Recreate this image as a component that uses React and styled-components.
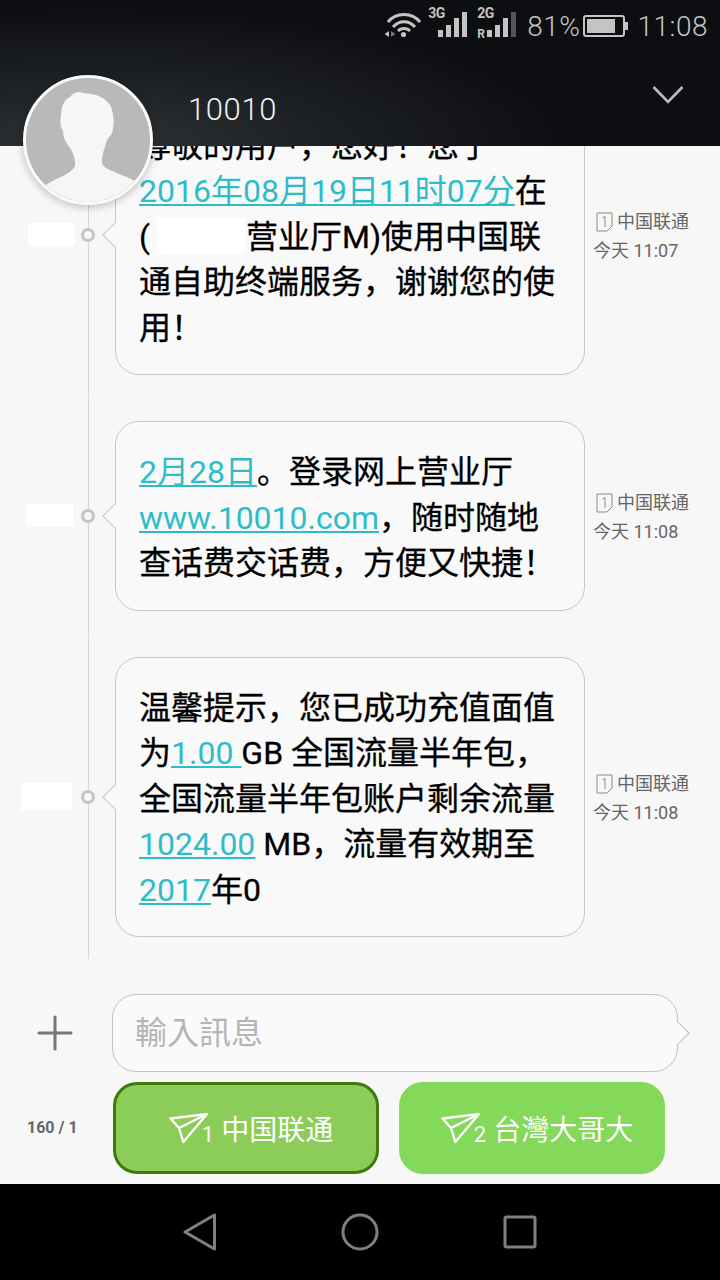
import React from 'react';
import styled, { createGlobalStyle } from 'styled-components';

const GlobalStyle = createGlobalStyle`
  html, body {
    margin: 0;
    padding: 0;
    background: #f7f7f7;
  }
  body {
    font-family: Roboto, "Noto Sans CJK SC", sans-serif;
  }
`;

const Screen = styled.div`
  width: 720px;
  height: 1280px;
  display: flex;
  flex-direction: column;
  overflow: hidden;
  background: #f7f7f7;
`;

const Header = styled.header`
  position: relative;
  z-index: 2;
  height: 146px;
  flex: none;
  padding: 0 12px;
  box-sizing: border-box;
  background:
    radial-gradient(ellipse 480px 140px at 90px 146px, #2e3335 0%, rgba(46, 51, 53, 0) 100%),
    #0d0e11;
`;

const StatusBar = styled.div`
  height: 52px;
  display: flex;
  align-items: center;
  justify-content: flex-end;
`;

const WifiIcon = styled.svg`
  margin: -3px 6px 0 0;
`;

const StatusText = styled.span`
  margin-right: ${(p) => p.$mr || 0}px;
  font-size: 28px;
  font-weight: 300;
  color: #c4c4c4;
  letter-spacing: 0.5px;
`;

const SignalWrap = styled.div`
  position: relative;
  width: 39px;
  height: 29px;
  margin: 0 ${(p) => p.$mr}px 7px 0;
`;

const SignalLabel = styled.span`
  position: absolute;
  left: 0;
  top: 0;
  font-size: 14px;
  line-height: 11px;
  font-weight: 700;
  letter-spacing: -0.4px;
  color: #c4c4c4;
`;

const RoamingMark = styled.span`
  position: absolute;
  left: 0;
  bottom: -2px;
  font-size: 12px;
  line-height: 10px;
  font-weight: 700;
  color: #c4c4c4;
`;

const Bars = styled.div`
  position: absolute;
  right: 0;
  bottom: 0;
  display: flex;
  align-items: flex-end;
  gap: 3px;
`;

const Bar = styled.i`
  width: 5px;
  height: ${(p) => p.$h}px;
  background: ${(p) => (p.$on ? '#c4c4c4' : '#555')};
`;

const Battery = styled.div`
  position: relative;
  width: 42px;
  height: 22px;
  padding: 2px;
  margin-right: 12px;
  box-sizing: border-box;
  border: 2px solid #c4c4c4;
  border-radius: 3px;
  &::after {
    content: '';
    position: absolute;
    right: -5px;
    top: 5px;
    width: 3px;
    height: 8px;
    background: #c4c4c4;
  }
`;

const BatteryFill = styled.div`
  width: 81%;
  height: 100%;
  background: #c4c4c4;
`;

const TitleRow = styled.div`
  height: 94px;
  padding: 0 24px 0 176px;
  display: flex;
  align-items: flex-start;
  justify-content: space-between;
  svg {
    margin-top: 33px;
  }
`;

const Title = styled.h1`
  margin: 40px 0 0;
  font-size: 31px;
  font-weight: 300;
  line-height: 36px;
  letter-spacing: 0.6px;
  color: #f0f0f0;
`;

const Avatar = styled.div`
  position: absolute;
  left: 23px;
  top: 75px;
  width: 124px;
  height: 124px;
  border: 3px solid #fafafa;
  border-radius: 50%;
  overflow: hidden;
  background: #b9b9b9;
  box-shadow: 0 2px 8px rgba(0, 0, 0, 0.25);
`;

const Thread = styled.main`
  flex: 1;
  min-height: 0;
  display: flex;
  flex-direction: column;
  justify-content: flex-end;
  overflow: hidden;
`;

const Row = styled.section`
  flex: none;
  display: flex;
  align-items: center;
  padding: 23px 0;
`;

const Gutter = styled.div`
  position: relative;
  flex: none;
  align-self: stretch;
  margin: -23px 0;
  width: 115px;
  display: flex;
  align-items: center;
  justify-content: flex-end;
  padding-right: 20px;
  box-sizing: border-box;
  &::before {
    content: '';
    position: absolute;
    left: 88px;
    top: 0;
    bottom: 1px;
    width: 1px;
    background: #d6d6d6;
  }
`;

const DateMask = styled.div`
  width: ${(p) => p.$w}px;
  height: ${(p) => p.$h}px;
  margin-right: ${(p) => p.$gap}px;
  background: #fff;
`;

const Dot = styled.span`
  position: relative;
  width: 14px;
  height: 14px;
  box-sizing: border-box;
  border: 3px solid #c4c4c4;
  border-radius: 50%;
  background: #f7f7f7;
`;

const Bubble = styled.div`
  position: relative;
  flex: none;
  width: 470px;
  box-sizing: border-box;
  padding: 28px 23px 23px;
  font-size: 32px;
  line-height: 45.5px;
  white-space: nowrap;
  color: #000;
  -webkit-text-stroke: 0.3px #000;
  background: #f9f9f9;
  border: 1px solid #c6c6c6;
  border-radius: 24px;
  &::before {
    content: '';
    position: absolute;
    left: -10px;
    top: 50%;
    width: 18px;
    height: 18px;
    margin-top: -9px;
    box-sizing: border-box;
    background: #f9f9f9;
    border-left: 1px solid #c6c6c6;
    border-bottom: 1px solid #c6c6c6;
    transform: rotate(45deg);
  }
`;

const Link = styled.span`
  color: #2fbcc9;
  -webkit-text-stroke: 0;
  text-decoration: underline;
  text-decoration-thickness: 2px;
  text-underline-offset: 2px;
`;

const Redacted = styled.span`
  display: inline-block;
  width: 88px;
  height: 36px;
  margin: 0 1px 0 7px;
  vertical-align: -6px;
  background: #fff;
`;

const Meta = styled.div`
  flex: none;
  margin: 4px 0 0 8px;
  display: flex;
  flex-direction: column;
  gap: 3px;
  font-size: 18px;
  line-height: 26px;
  color: #666;
`;

const Sim = styled.span`
  display: flex;
  align-items: center;
  gap: 4px;
  padding-left: 3px;
`;

const Composer = styled.footer`
  flex: none;
  height: 224px;
  box-sizing: border-box;
  padding-top: 34px;
  background: #f7f7f7;
`;

const InputRow = styled.div`
  display: flex;
  align-items: center;
`;

const PlusButton = styled.div`
  width: 112px;
  padding-left: 37px;
  box-sizing: border-box;
  display: flex;
`;

const InputBox = styled.div`
  position: relative;
  width: 566px;
  height: 78px;
  box-sizing: border-box;
  padding: 0 22px;
  font-family: Roboto, "Noto Sans CJK TC", sans-serif;
  font-size: 32px;
  line-height: 76px;
  color: #b4b4b4;
  background: #fafafa;
  border: 1px solid #c2c2c2;
  border-radius: 24px;
  &::after {
    content: '';
    position: absolute;
    right: -9px;
    top: 50%;
    width: 18px;
    height: 18px;
    margin-top: -9px;
    box-sizing: border-box;
    background: #fafafa;
    border-top: 1px solid #c2c2c2;
    border-right: 1px solid #c2c2c2;
    transform: rotate(45deg);
  }
`;

const SendRow = styled.div`
  margin-top: 10px;
  display: flex;
  align-items: center;
  gap: 20px;
`;

const Counter = styled.span`
  width: 113px;
  margin: -2px -20px 0 0;
  padding-left: 27px;
  box-sizing: border-box;
  font-size: 16px;
  font-weight: 700;
  color: #666;
  white-space: nowrap;
`;

const SendButton = styled.div`
  width: 266px;
  height: 92px;
  box-sizing: border-box;
  display: flex;
  align-items: center;
  justify-content: center;
  padding-left: 10px;
  font-size: 28px;
  white-space: nowrap;
  color: #fff;
  border-radius: 24px;
  background: ${(p) => (p.$selected ? '#8ccc58' : '#84d85a')};
  border: ${(p) => (p.$selected ? '3px solid #3d7a0c' : 'none')};
`;

const SimNo = styled.span`
  font-size: 22px;
  line-height: 22px;
  align-self: flex-end;
  margin: 0 7px ${(p) => (p.$selected ? 25 : 28)}px -6px;
`;

const NavBar = styled.nav`
  flex: none;
  height: 96px;
  padding: 0 183px;
  display: flex;
  align-items: center;
  justify-content: space-between;
  background: #000;
`;

const messages = [
  {
    id: 1,
    time: '今天 11:07',
    mask: { w: 47, h: 23, gap: 6 },
    lines: (
      <>
        尊敬的用户，您好！您于<br />
        <Link>2016年08月19日11时07分</Link>在<br />
        (<Redacted />营业厅M)使用中国联<br />
        通自助终端服务，谢谢您的使<br />
        用！
      </>
    ),
  },
  {
    id: 2,
    time: '今天 11:08',
    mask: { w: 47, h: 23, gap: 8 },
    lines: (
      <>
        <Link>2月28日</Link>。登录网上营业厅<br />
        <Link>www.10010.com</Link>，随时随地<br />
        查话费交话费，方便又快捷！
      </>
    ),
  },
  {
    id: 3,
    time: '今天 11:08',
    mask: { w: 51, h: 27, gap: 9 },
    lines: (
      <>
        温馨提示，您已成功充值面值<br />
        为<Link>1.00 </Link>GB 全国流量半年包，<br />
        全国流量半年包账户剩余流量<br />
        <Link>1024.00</Link> MB，流量有效期至<br />
        <Link>2017</Link>年0
      </>
    ),
  },
];

const PlaneIcon = () => (
  <svg width="39" height="31" viewBox="0 0 39 31" fill="none" stroke="#fff" strokeWidth="2.4" strokeLinejoin="round">
    <path d="M1.5 5.5 L38 1 L14.3 29 L10 15 Z" />
    <path d="M10 15 L38 1" />
  </svg>
);

const SimIcon = () => (
  <svg width="17" height="20" viewBox="0 0 17 20" fill="none" stroke="#8a8a8a" strokeWidth="1">
    <path d="M1 1 H16 V14 L11 19 H1 Z" />
    <path d="M6.5 6 L9 4.5 V15" />
  </svg>
);

const Signal = ({ label, heights, dim, roaming, mr }) => (
  <SignalWrap $mr={mr}>
    <SignalLabel>{label}</SignalLabel>
    {roaming && <RoamingMark>R</RoamingMark>}
    <Bars>
      {heights.map((h, i) => (
        <Bar key={i} $h={h} $on={i !== dim} />
      ))}
    </Bars>
  </SignalWrap>
);

const App = () => {
  return (
    <Screen>
      <GlobalStyle />
      <Header>
        <StatusBar>
          <WifiIcon width="38" height="26" viewBox="0 0 38 26" fill="none" stroke="#c4c4c4" strokeWidth="3">
            <path d="M4 10 C12 0 28 0 36 10" />
            <path d="M9 15 C15 8 25 8 31 15" />
            <path d="M14 19 C17 15.5 23 15.5 26 19" />
            <circle cx="19.5" cy="22.5" r="2.6" fill="#c4c4c4" stroke="none" />
            <path d="M0.5 22 L5 19 V25 Z" fill="#c4c4c4" stroke="none" />
            <path d="M7 19 L11.5 22 L7 25 Z" fill="#777" stroke="none" />
          </WifiIcon>
          <Signal label="3G" heights={[7, 12, 19, 25]} mr={10} />
          <Signal label="2G" heights={[7, 12, 19, 25]} dim={3} roaming mr={11} />
          <StatusText $mr={3}>81%</StatusText>
          <Battery><BatteryFill /></Battery>
          <StatusText>11:08</StatusText>
        </StatusBar>
        <TitleRow>
          <Title>10010</Title>
          <svg width="32" height="20" viewBox="0 0 32 20" fill="none" stroke="#bdbdbd" strokeWidth="2.6">
            <path d="M1.5 2 L16 17 L30.5 2" />
          </svg>
        </TitleRow>
        <Avatar>
          <svg width="124" height="124" viewBox="0 0 124 124">
            <path
              fill="#f6f6f6"
              d="M20 107 C30 100 46 96 49 88 C50 82 47 76 45 71 C40 65 37 60 37 53 C34 48 34 44 35 38 C35 28 38 22 44 19 C47 15 51 14 54 14 C58 16 64 15 70 17 C79 20 85 26 86 32 C88 40 88 45 87 50 C87 56 83 59 81 62 C79 70 76 76 76 82 C75 88 80 90 84 92 C92 96 102 99 109 103 L100 124 L20 124 Z"
            />
          </svg>
        </Avatar>
      </Header>

      <Thread>
        {messages.map((m) => (
          <Row key={m.id}>
            <Gutter>
              <DateMask $w={m.mask.w} $h={m.mask.h} $gap={m.mask.gap} />
              <Dot />
            </Gutter>
            <Bubble>{m.lines}</Bubble>
            <Meta>
              <Sim><SimIcon />中国联通</Sim>
              <span>{m.time}</span>
            </Meta>
          </Row>
        ))}
      </Thread>

      <Composer>
        <InputRow>
          <PlusButton>
            <svg width="36" height="36" viewBox="0 0 36 36" stroke="#777" strokeWidth="3" strokeLinecap="round">
              <path d="M18 2 V34 M2 18 H34" />
            </svg>
          </PlusButton>
          <InputBox>輸入訊息</InputBox>
        </InputRow>
        <SendRow>
          <Counter>160 / 1</Counter>
          <SendButton $selected>
            <PlaneIcon /><SimNo $selected>1</SimNo>中国联通
          </SendButton>
          <SendButton>
            <PlaneIcon /><SimNo>2</SimNo>台灣大哥大
          </SendButton>
        </SendRow>
      </Composer>

      <NavBar>
        <svg width="34" height="38" viewBox="0 0 34 38" fill="none" stroke="#808080" strokeWidth="3" strokeLinejoin="round">
          <path d="M31.5 2 V36 L2 19 Z" />
        </svg>
        <svg width="38" height="38" viewBox="0 0 38 38" fill="none" stroke="#808080" strokeWidth="3">
          <circle cx="19" cy="19" r="17" />
        </svg>
        <svg width="34" height="34" viewBox="0 0 34 34" fill="none" stroke="#808080" strokeWidth="3" strokeLinejoin="round">
          <rect x="2" y="2" width="30" height="30" rx="1.5" />
        </svg>
      </NavBar>
    </Screen>
  );
};

export default App;
